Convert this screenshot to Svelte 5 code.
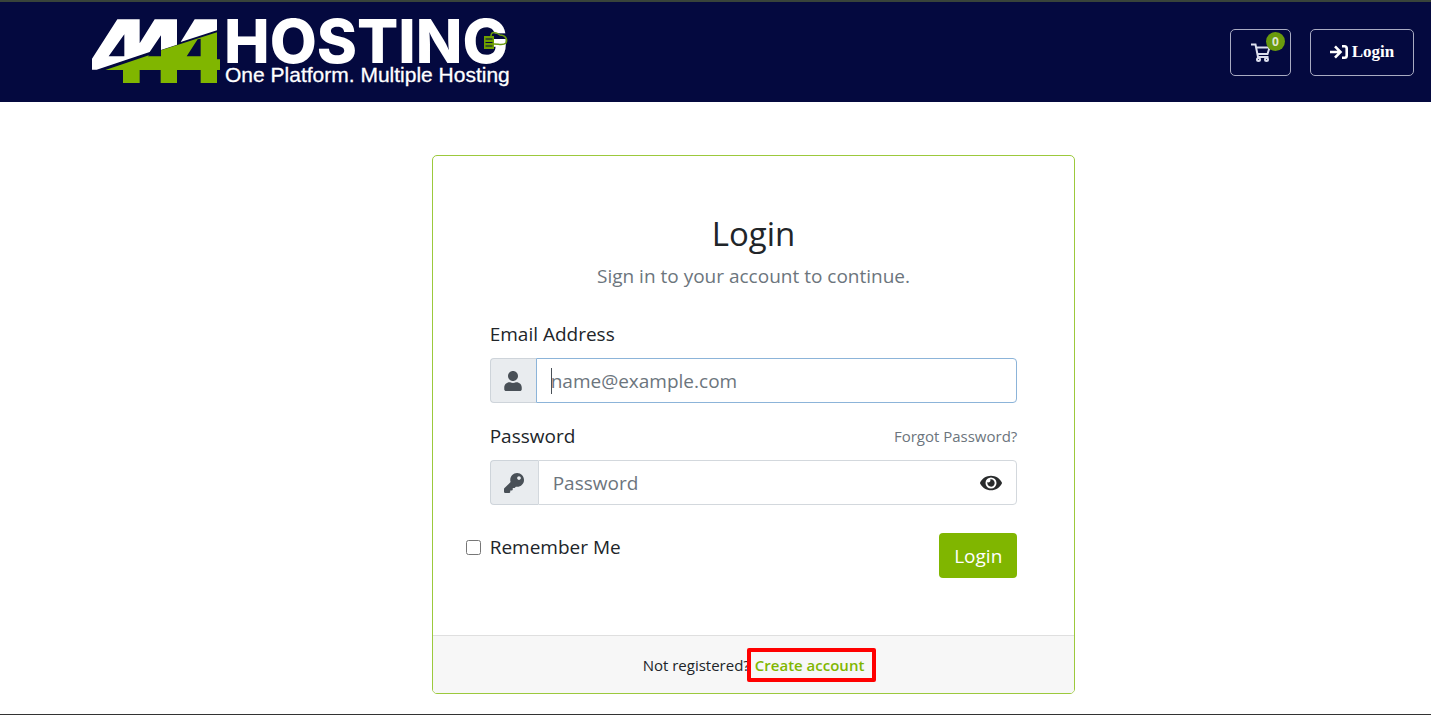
<script>
  let email = $state('');
  let password = $state('');
  let remember = $state(false);
  let revealed = $state(false);
</script>

<div class="page">
  <header>
    <a class="brand" href="#home" aria-label="444 Hosting home">
      <svg class="logo" viewBox="0 0 430 74" width="430" height="74">
        <svg x="0" y="0" width="130" height="75" viewBox="36 45 390 225">
          <path fill="#fff" d="M112 58H179V130L224 58H291V134L243 150V106L209 156L50 209H36V176ZM133 103L86 169H133Z" fill-rule="evenodd" />
          <path fill="#fff" d="M344 58H411V91L302 126Z" />
          <path fill="#80b600" fill-rule="evenodd" d="M411 97V178H420V210H411V249H362V210H291V249H242V210H179V249H129V210H76L209 165L203 169H243V151ZM353 118L320 169H362V116Z" />
        </svg>
        <text class="word" x="132" y="48">HOSTING</text>
        <text class="tagline" x="133" y="67">One Platform. Multiple Hosting</text>
        <rect x="392" y="21" width="10" height="13" fill="#6fa000" />
        <path d="M393.500 24H400.500M393.500 27.500H400.500M393.500 31H400.500" stroke="#04093f" stroke-width="1" />
        <path d="M399 21C399 16 404 17 408 20C413 20 416 24 414 28C411 31 407 29 402 29" fill="none" stroke="#6a9a0d" stroke-width="1.500" />
      </svg>
    </a>
    <nav>
      <a class="box cart" href="#cart" aria-label="Shopping cart">
        <svg viewBox="0 0 20 19" width="20" height="19" fill="none" stroke="#dddfee" stroke-width="2">
          <path d="M0 1.500H4.500L7 14H17.500M5.500 4.500H18.500L16.500 11H6.500" />
          <circle cx="7.500" cy="16.500" r="1.500" /><circle cx="15.500" cy="16.500" r="1.500" />
        </svg>
        <span class="badge">0</span>
      </a>
      <a class="box signin" href="#login">
        <svg viewBox="0 0 18 14" width="18" height="14" fill="none" stroke="#fff" stroke-width="2.600"><path d="M0 7H10M5 1.300L10.500 7L5 12.700M12 1.300H14.500Q16.700 1.300 16.700 3.500V10.500Q16.700 12.700 14.500 12.700H12" /></svg>
        Login
      </a>
    </nav>
  </header>

  <main>
    <form class="card" onsubmit={(e) => e.preventDefault()}>
      <div class="body">
        <h1>Login</h1>
        <p class="lead">Sign in to your account to continue.</p>

        <label for="email">Email Address</label>
        <div class="group">
          <span class="addon">
            <svg viewBox="0 0 448 512" width="18" height="20" fill="#495057"><path d="M224 256c70.700 0 128-57.300 128-128S294.700 0 224 0 96 57.300 96 128s57.300 128 128 128zm89.600 32h-16.700c-22.200 10.200-46.900 16-72.900 16s-50.600-5.800-72.900-16h-16.700C60.200 288 0 348.200 0 422.400V464c0 26.500 21.500 48 48 48h352c26.500 0 48-21.500 48-48v-41.600c0-74.200-60.200-134.400-134.400-134.400z" /></svg>
          </span>
          <div class="field active">
            {#if !email}<i class="caret"></i>{/if}
            <input id="email" type="email" placeholder="name@example.com" bind:value={email} />
          </div>
        </div>

        <div class="labels">
          <label for="password">Password</label>
          <a class="forgot" href="#reset">Forgot Password?</a>
        </div>
        <div class="group">
          <span class="addon wide">
            <svg viewBox="0 0 512 512" width="20" height="20" fill="#495057"><path d="M512 176c0 97.200-78.800 176-176 176-11.200 0-22.200-1.100-32.800-3.100l-24 27a24 24 0 0 1-18 8.100H224v40c0 13.300-10.700 24-24 24h-40v40c0 13.300-10.700 24-24 24H24c-13.300 0-24-10.700-24-24v-78c0-6.400 2.500-12.500 7-17l161.800-161.800A176 176 0 0 1 160 176C160 78.800 238.800 0 336 0s176 78.500 176 176zm-176-48c0 26.500 21.500 48 48 48s48-21.500 48-48-21.500-48-48-48-48 21.500-48 48z" /></svg>
          </span>
          <div class="field">
            <input id="password" type={revealed ? 'text' : 'password'} placeholder="Password" bind:value={password} />
            <button class="eye" type="button" aria-label="Show password" onclick={() => (revealed = !revealed)}>
              <svg viewBox="0 0 576 512" width="22" height="20" fill="#292b2c"><path d="M572.500 241.400C518.300 135.600 410.900 64 288 64S57.700 135.600 3.500 241.400a32.400 32.400 0 0 0 0 29.200C57.700 376.400 165.100 448 288 448s230.300-71.600 284.500-177.400a32.400 32.400 0 0 0 0-29.200zM288 400a144 144 0 1 1 144-144 143.900 143.900 0 0 1-144 144zm0-240a95.300 95.300 0 0 0-25.300 3.800 47.900 47.900 0 0 1-66.900 66.900A95.800 95.800 0 1 0 288 160z" /></svg>
            </button>
          </div>
        </div>

        <div class="actions">
          <label class="remember"><input type="checkbox" bind:checked={remember} />Remember Me</label>
          <button class="submit" type="submit">Login</button>
        </div>
      </div>
      <footer>
        <span>Not registered?</span>
        <a class="create" href="#register">Create account</a>
      </footer>
    </form>
  </main>
</div>

<style>
  :global(body) { margin: 0; }
  .page {
    box-sizing: border-box;
    min-height: 100vh;
    display: flex;
    flex-direction: column;
    border-top: 2px solid #38433a;
    border-bottom: 1px solid #333;
    background: #fff;
    color: #212529;
    font-family: "Open Sans", sans-serif;
    font-size: 19px;
  }
  a { text-decoration: none; }
  svg { display: block; }
  header {
    display: flex;
    justify-content: space-between;
    align-items: center;
    height: 100px;
    padding: 0 17px 0 92px;
    background: #04093f;
  }
  .logo { overflow: visible; }
  .word { font: 800 61px Inter, sans-serif; fill: #fff; }
  .tagline { font: 21px "Liberation Sans", Arial, sans-serif; fill: #fff; stroke: #fff; stroke-width: 0.3px; }
  nav { display: flex; gap: 19px; }
  .box {
    box-sizing: border-box;
    display: flex;
    align-items: center;
    justify-content: center;
    height: 47px;
    border: 1px solid #a9abc2;
    border-radius: 5px;
  }
  .cart { position: relative; width: 61px; }
  .badge {
    position: absolute;
    top: 2px;
    right: 5px;
    width: 19px;
    border-radius: 50%;
    background: #6a9a0d;
    color: #dde3d0;
    font: 700 12px/19px "Open Sans", sans-serif;
    text-align: center;
  }
  .signin {
    width: 104px;
    gap: 4px;
    color: #fff;
    font: 700 17px "Liberation Serif", "Times New Roman", serif;
  }
  main {
    display: flex;
    justify-content: center;
    padding: 53px 0 20px 76px;
  }
  .card {
    box-sizing: border-box;
    width: 47.5%;
    min-width: 480px;
    overflow: hidden;
    border: 1px solid #9cc93c;
    border-radius: 5px;
  }
  .body { padding: 58px 57px 57px; }
  h1 {
    margin: 0 0 8px;
    font-size: 33px;
    font-weight: 400;
    line-height: 40px;
    text-align: center;
  }
  .lead {
    margin: 0 0 30px;
    color: #6c757d;
    line-height: 28px;
    text-align: center;
  }
  label { display: block; line-height: 28px; }
  .group { display: flex; height: 45px; margin: 10px 0 19px; }
  .addon {
    box-sizing: border-box;
    display: flex;
    align-items: center;
    justify-content: center;
    width: 46px;
    border: 1px solid #ced4da;
    border-right: 0;
    border-radius: 4px 0 0 4px;
    background: #e9ecef;
  }
  .addon.wide { width: 48px; }
  .field {
    position: relative;
    display: flex;
    flex: 1;
    align-items: center;
    padding-left: 14px;
    border: 1px solid #d3d8dd;
    border-radius: 0 4px 4px 0;
  }
  .field.active { border-color: #8cb4d9; }
  .field input {
    flex: 1;
    min-width: 0;
    padding: 0;
    border: 0;
    outline: 0;
    background: none;
    color: #495057;
    font: inherit;
  }
  .field input::placeholder { color: #6c757d; opacity: 1; }
  .caret {
    position: absolute;
    left: 14px;
    width: 1px;
    height: 26px;
    background: #495057;
  }
  .eye { padding: 0 14px; border: 0; background: none; }
  .labels { display: flex; justify-content: space-between; align-items: center; }
  .forgot { color: #6c757d; font-size: 15px; }
  .actions { display: flex; justify-content: space-between; align-items: flex-start; margin-top: 28px; }
  .remember { display: flex; align-items: center; gap: 9px; margin-left: -24px; }
  .remember input { width: 15px; height: 15px; margin: 0; }
  .submit {
    height: 45px;
    padding: 0 15px;
    border: 0;
    border-radius: 4px;
    background: #80b600;
    color: #fff;
    font: inherit;
  }
  footer {
    display: flex;
    justify-content: center;
    align-items: center;
    gap: 5px;
    height: 57px;
    border-top: 1px solid #dfdfdf;
    background: #f7f7f7;
    font-size: 15px;
  }
  .create {
    position: relative;
    color: #80b600;
    font-weight: 600;
  }
  .create::after {
    content: "";
    position: absolute;
    inset: -7px -12px -7px -8px;
    border: 4px solid #f00;
    border-radius: 2px;
  }
</style>
